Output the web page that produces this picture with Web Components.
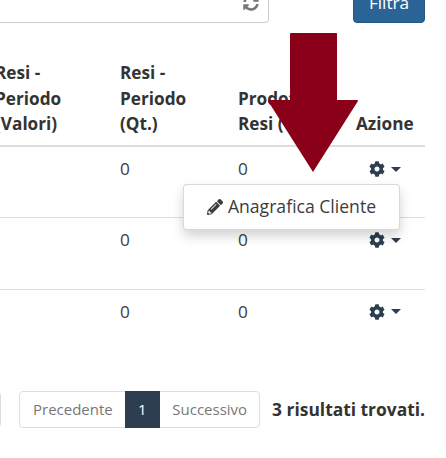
<!DOCTYPE html>
<html lang="it">
<head>
<meta charset="utf-8">
<title>Clienti</title>
<style>
  html, body { margin: 0; background: #fff; overflow: hidden; }
  body { width: 446px; height: 458px; font: 17.2px/25.7px "Open Sans", sans-serif; color: #333; }
  x-page { width: 425px; }
</style>
</head>
<body>
<x-page>
  <x-filter-bar slot="top"></x-filter-bar>
  <x-data-table slot="table">
    <x-head-cell>Resi -<br>Periodo<br>(Valori)</x-head-cell>
    <x-head-cell>Resi -<br>Periodo<br>(Qt.)</x-head-cell>
    <x-head-cell>Prodotti<br>Resi (Qt.)</x-head-cell>
    <x-head-cell>Azione</x-head-cell>
    <x-table-row></x-table-row>
    <x-table-row></x-table-row>
    <x-table-row last></x-table-row>
  </x-data-table>
  <x-pager slot="pager"></x-pager>
  <x-row-menu slot="over">Anagrafica Cliente</x-row-menu>
  <x-big-arrow slot="over"></x-big-arrow>
</x-page>

<script>
const COG = 'M487.4 315.7l-42.6-24.6c4.3-23.2 4.3-47 0-70.2l42.6-24.6c4.9-2.8 7.1-8.6 5.5-14-11.1-35.6-30-67.8-54.7-94.6-3.8-4.1-10-5.1-14.8-2.3L380.8 110c-17.9-15.4-38.5-27.3-60.8-35.1V25.8c0-5.6-3.9-10.5-9.4-11.7-36.7-8.2-74.3-7.8-109.2 0-5.5 1.2-9.4 6.1-9.4 11.7V75c-22.2 7.9-42.8 19.8-60.8 35.1L88.7 85.5c-4.9-2.8-11-1.9-14.8 2.3-24.7 26.7-43.6 58.9-54.7 94.6-1.7 5.4.6 11.2 5.5 14L67.3 221c-4.3 23.2-4.3 47 0 70.2l-42.6 24.6c-4.9 2.8-7.1 8.6-5.5 14 11.1 35.6 30 67.8 54.7 94.6 3.8 4.1 10 5.1 14.8 2.3l42.6-24.6c17.9 15.4 38.5 27.3 60.8 35.1v49.2c0 5.6 3.9 10.5 9.4 11.7 36.7 8.2 74.3 7.8 109.2 0 5.5-1.2 9.4-6.1 9.4-11.7v-49.2c22.2-7.9 42.8-19.8 60.8-35.1l42.6 24.6c4.9 2.8 11 1.9 14.8-2.3 24.7-26.7 43.6-58.9 54.7-94.6 1.5-5.5-.7-11.3-5.6-14.1zM256 336c-44.1 0-80-35.9-80-80s35.9-80 80-80 80 35.9 80 80-35.9 80-80 80z'
const PENCIL = 'M497.9 142.1l-46.1 46.1c-4.7 4.7-12.3 4.7-17 0l-111-111c-4.7-4.7-4.7-12.3 0-17l46.1-46.1c18.7-18.7 49.1-18.7 67.9 0l60.1 60.1c18.8 18.7 18.8 49.1 0 67.9zM284.2 99.8L21.6 362.4.4 483.9c-2.9 16.4 11.4 30.6 27.8 27.8l121.5-21.3 262.6-262.6c4.7-4.7 4.7-12.3 0-17l-111-111c-4.8-4.7-12.4-4.7-17.1 0zM124.1 339.9c-5.5-5.5-5.5-14.3 0-19.8l154-154c5.5-5.5 14.3-5.5 19.8 0s5.5 14.3 0 19.8l-154 154c-5.5 5.5-14.3 5.5-19.8 0zM88 424h48v36.3l-64.5 11.3-31.1-31.1L51.7 376H88v48z'
const SYNC = 'M370.72 133.28C339.458 104.008 298.888 87.962 255.848 88c-77.458.068-144.328 53.178-162.791 126.85-1.344 5.363-6.122 9.15-11.651 9.15H24.103c-7.498 0-13.194-6.807-11.807-14.176C33.933 94.924 134.813 8 256 8c66.448 0 126.791 26.136 171.315 68.685L463.03 40.97C478.149 25.851 504 36.559 504 57.941V192c0 13.255-10.745 24-24 24H345.941c-21.382 0-32.09-25.851-16.971-40.971l41.75-41.749zM32 296h134.059c21.382 0 32.09 25.851 16.971 40.971l-41.75 41.75c31.262 29.273 71.835 45.319 114.876 45.28 77.418-.07 144.315-53.144 162.787-126.849 1.344-5.363 6.122-9.15 11.651-9.15h57.304c7.498 0 13.194 6.807 11.807 14.176C478.067 417.076 377.187 504 256 504c-66.448 0-126.791-26.136-171.315-68.685L48.97 471.03C33.851 486.149 8 475.441 8 454.059V320c0-13.255 10.745-24 24-24z'

class XPage extends HTMLElement {
  connectedCallback() {
    this.attachShadow({mode: 'open'}).innerHTML = `
    <style>
      :host { display: flow-root; position: relative; height: 458px; }
      .over { position: absolute; inset: 0; pointer-events: none; }
    </style>
    <slot name="top"></slot>
    <slot name="table"></slot>
    <slot name="pager"></slot>
    <div class="over"><slot name="over"></slot></div>
    `
  }
}

class XFilterBar extends HTMLElement {
  connectedCallback() {
    this.attachShadow({mode: 'open'}).innerHTML = `
    <style>
      :host { display: flex; justify-content: space-between; height: 40px; margin: -17px 0 0 -10px; }
      .input {
        width: 279px; box-sizing: border-box; background: #fff;
        border: 1px solid #ccc; border-radius: 4px;
        display: flex; align-items: flex-end; justify-content: flex-end;
        padding: 0 9px 11px 0;
      }
      svg { width: 16px; height: 16px; fill: #767676; display: block; }
      button {
        width: 72px; border: 1px solid #245682; border-radius: 4px;
        background: #2a6496; color: #fff; padding: 0;
        font: inherit;
      }
    </style>
    <div class="input"><svg viewBox="0 0 512 512"><path d="${SYNC}"/></svg></div>
    <button>Filtra</button>
    `
  }
}

class XDataTable extends HTMLElement {
  connectedCallback() {
    this.attachShadow({mode: 'open'}).innerHTML = `
    <style>
      :host {
        display: grid; grid-template-columns: 125px 118px 118px 77px;
        margin: 29px 0 0 -13px; width: 438px;
      }
    </style>
    <slot></slot>
    `
  }
}

class XHeadCell extends HTMLElement {
  connectedCallback() {
    this.attachShadow({mode: 'open'}).innerHTML = `
    <style>
      :host {
        display: flex; align-items: flex-end; padding: 8px; height: 77px;
        font-weight: 700; color: #333; border-bottom: 2px solid #ddd; white-space: nowrap;
      }
    </style>
    <div><slot></slot></div>
    `
  }
}

class XTableRow extends HTMLElement {
  connectedCallback() {
    this.attachShadow({mode: 'open'}).innerHTML = `
    <style>
      :host { display: grid; grid-column: 1 / -1; grid-template-columns: subgrid; height: 71.4px; box-sizing: border-box; border-bottom: 1px solid #ddd; }
      :host([last]) { border-bottom: 0; }
      .cell { padding: 9px 8px 8px; color: #3c3c3c; }
      .actions { display: flex; align-items: center; gap: 6px; padding: 14px 0 0 21px; height: 16px; }
      .actions svg { display: block; }
      .cog { width: 16px; height: 16px; fill: #2c3e50; }
      .caret { width: 10px; height: 5px; fill: #2c3e50; }
    </style>
    <div class="cell"></div>
    <div class="cell">0</div>
    <div class="cell">0</div>
    <div class="actions">
      <svg class="cog" viewBox="0 0 512 512"><path d="${COG}"/></svg>
      <svg class="caret" viewBox="0 0 10 5"><path d="M0 0h10L5 5z"/></svg>
    </div>
    `
  }
}

class XPager extends HTMLElement {
  connectedCallback() {
    this.attachShadow({mode: 'open'}).innerHTML = `
    <style>
      :host { display: flex; align-items: center; height: 37px; margin: 30px 0 0 -10px; width: 450px; }
      .stub { flex: none; width: 11px; height: 35px; box-sizing: border-box; border: 1px solid #ddd; border-left: 0; border-radius: 0 4px 4px 0; }
      .pages {
        flex: none; display: flex; margin-left: 18px; height: 37px; box-sizing: border-box;
        border: 1px solid #ddd; border-radius: 4px; font-size: 15px; line-height: 35px; color: #777;
      }
      .pages span { padding: 0 12px 0 13px; }
      .pages .active { box-sizing: border-box; width: 35px; padding: 0; text-align: center; background: #2c3e50; color: #fff; margin: -1px 0; line-height: 37px; }
      .pages .next { padding: 0 12px 0 12.500px; }
      .count { flex: none; margin-left: 12px; font-size: 17.400px; font-weight: 700; color: #333; white-space: nowrap; }
    </style>
    <div class="stub"></div>
    <div class="pages"><span>Precedente</span><span class="active">1</span><span class="next">Successivo</span></div>
    <div class="count">3 risultati trovati.</div>
    `
  }
}

class XRowMenu extends HTMLElement {
  connectedCallback() {
    this.attachShadow({mode: 'open'}).innerHTML = `
    <style>
      :host {
        position: absolute; left: 183px; top: 184px; width: 217px; height: 46px; box-sizing: border-box;
        display: flex; align-items: center; justify-content: center; gap: 5px;
        background: #fff; border: 1px solid rgba(0,0,0,.15); border-radius: 4px;
        box-shadow: 0 6px 12px rgba(0,0,0,.175); color: #3c3c3c; font-size: 17.6px;
      }
      svg { width: 16px; height: 16px; fill: #3c3c3c; flex: none; }
    </style>
    <svg viewBox="0 0 512 512"><path d="${PENCIL}"/></svg>
    <span><slot></slot></span>
    `
  }
}

class XBigArrow extends HTMLElement {
  connectedCallback() {
    this.attachShadow({mode: 'open'}).innerHTML = `
    <style>
      :host { position: absolute; left: 268px; top: 33px; width: 90px; height: 139px; }
      svg { display: block; }
    </style>
    <svg width="90" height="139" viewBox="0 0 90 139">
      <path fill="#8a0019" d="M23 0H68.500Q69 0 69 1V67H89Q90 67 90 68L45 139L0 68Q0 67 1 67H22V1Q22 0 23 0Z"/>
    </svg>
    `
  }
}

customElements.define('x-page', XPage)
customElements.define('x-filter-bar', XFilterBar)
customElements.define('x-data-table', XDataTable)
customElements.define('x-head-cell', XHeadCell)
customElements.define('x-table-row', XTableRow)
customElements.define('x-pager', XPager)
customElements.define('x-row-menu', XRowMenu)
customElements.define('x-big-arrow', XBigArrow)
</script>
</body>
</html>
